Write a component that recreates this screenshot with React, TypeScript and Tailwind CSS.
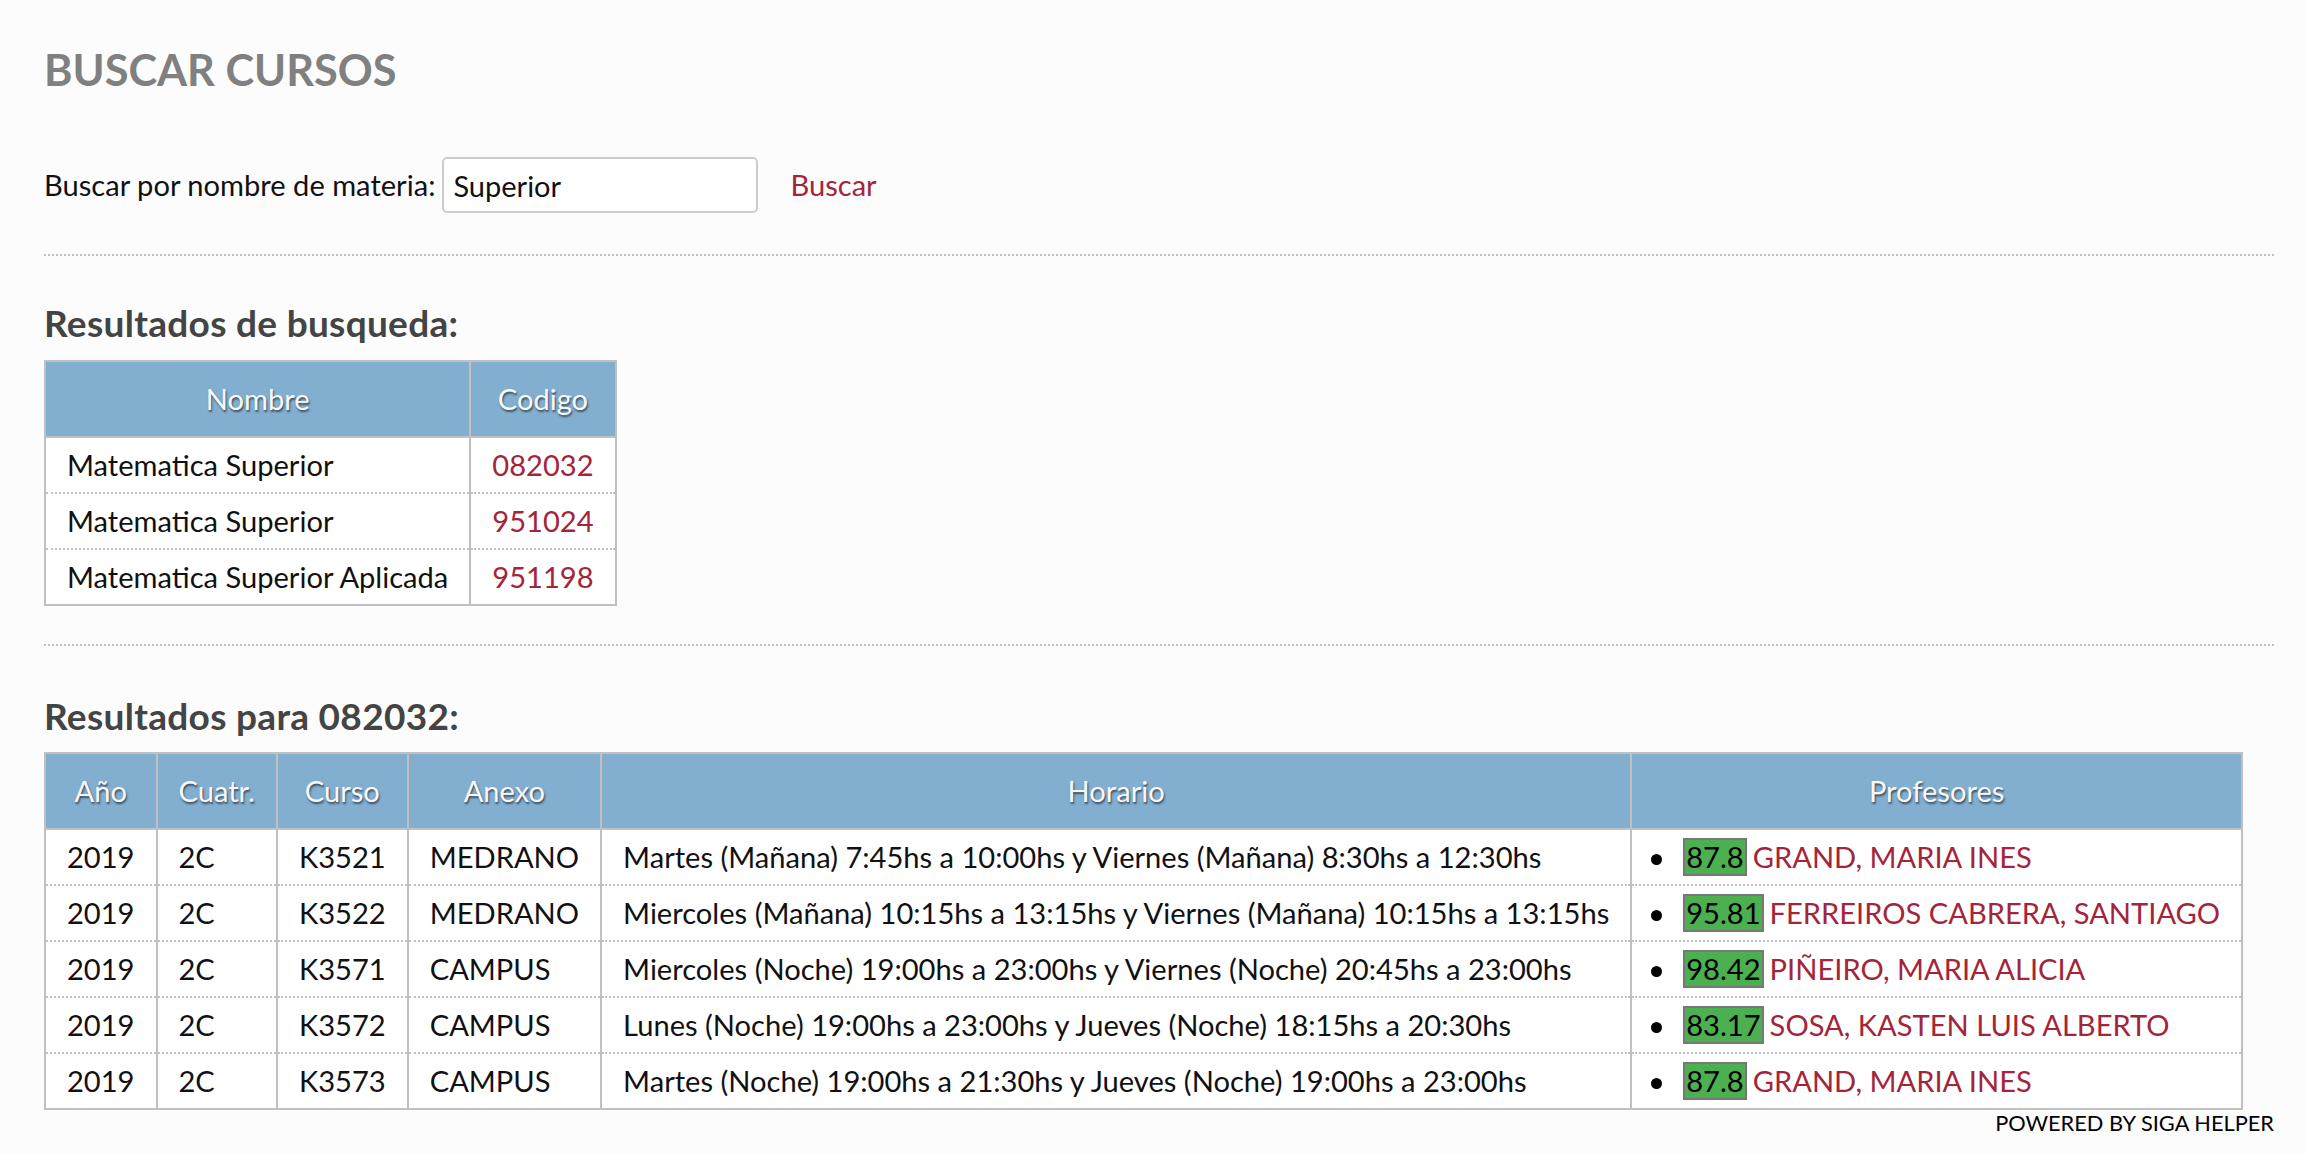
import React from "react";

const cursos = [
  { anio: "2019", cuatr: "2C", curso: "K3521", anexo: "MEDRANO", horario: "Martes (Mañana) 7:45hs a 10:00hs y Viernes (Mañana) 8:30hs a 12:30hs", score: "87.8", prof: "GRAND, MARIA INES" },
  { anio: "2019", cuatr: "2C", curso: "K3522", anexo: "MEDRANO", horario: "Miercoles (Mañana) 10:15hs a 13:15hs y Viernes (Mañana) 10:15hs a 13:15hs", score: "95.81", prof: "FERREIROS CABRERA, SANTIAGO" },
  { anio: "2019", cuatr: "2C", curso: "K3571", anexo: "CAMPUS", horario: "Miercoles (Noche) 19:00hs a 23:00hs y Viernes (Noche) 20:45hs a 23:00hs", score: "98.42", prof: "PIÑEIRO, MARIA ALICIA" },
  { anio: "2019", cuatr: "2C", curso: "K3572", anexo: "CAMPUS", horario: "Lunes (Noche) 19:00hs a 23:00hs y Jueves (Noche) 18:15hs a 20:30hs", score: "83.17", prof: "SOSA, KASTEN LUIS ALBERTO" },
  { anio: "2019", cuatr: "2C", curso: "K3573", anexo: "CAMPUS", horario: "Martes (Noche) 19:00hs a 21:30hs y Jueves (Noche) 19:00hs a 23:00hs", score: "87.8", prof: "GRAND, MARIA INES" },
];

const materias = [
  { nombre: "Matematica Superior", codigo: "082032" },
  { nombre: "Matematica Superior", codigo: "951024" },
  { nombre: "Matematica Superior Aplicada", codigo: "951198" },
];

const th =
  "px-[21px] py-[18px] leading-[38px] font-normal text-center text-[#f7f7f7] border-r-2 border-[#c0c0c0] whitespace-nowrap [text-shadow:1px_2px_2px_rgba(0,0,0,0.55)]";
const td =
  "px-[21px] py-[8px] leading-[38px] text-left border-r-2 border-[#c0c0c0] whitespace-nowrap";
const tr = "bg-white border-b-2 border-dotted border-[#c0c0c0]";

export default function App() {
  return (
    <div className="min-h-[1154px] bg-[#fcfcfc] pl-[44px] pr-[32px] pt-[43px] font-['Lato','Open_Sans',sans-serif] text-[29.1px] text-[#111]">
      <h1 className="text-[43.3px] leading-[52px] font-bold text-[#808080]">BUSCAR CURSOS</h1>

      <div className="mt-[62px] flex h-[56px] items-center">
        <span className="leading-[34px]">Buscar por nombre de materia:</span>
        <input
          defaultValue="Superior"
          className="ml-[7px] h-[56px] w-[316px] rounded-[5px] border-2 border-[#cccccc] bg-white pl-[9px] text-[29px] text-[#111] outline-none"
        />
        <a className="ml-[32px] cursor-pointer text-[#a4253a]">Buscar</a>
      </div>

      <div className="mt-[41px] border-t-2 border-dotted border-[#c0c0c0]" />

      <h2 className="mt-[46px] text-[37px] leading-[42px] font-bold tracking-[0.3px] text-[#444]">Resultados de busqueda:</h2>

      <table className="mt-[16px] border-collapse border-2 border-[#c0c0c0]">
        <thead>
          <tr className="bg-[#82aecf] border-b-2 border-[#c0c0c0]">
            <th className={th}>Nombre</th>
            <th className={th}>Codigo</th>
          </tr>
        </thead>
        <tbody>
          {materias.map((m, i) => (
            <tr key={i} className={tr}>
              <td className={td}>{m.nombre}</td>
              <td className={td + " text-[#a4253a]"}>{m.codigo}</td>
            </tr>
          ))}
        </tbody>
      </table>

      <div className="mt-[38px] border-t-2 border-dotted border-[#c0c0c0]" />

      <h2 className="mt-[49px] text-[37px] leading-[42px] font-bold tracking-[0.3px] text-[#444]">Resultados para 082032:</h2>

      <table className="mt-[15px] border-collapse border-2 border-[#c0c0c0]">
        <thead>
          <tr className="bg-[#82aecf] border-b-2 border-[#c0c0c0]">
            <th className={th}>Año</th>
            <th className={th}>Cuatr.</th>
            <th className={th}>Curso</th>
            <th className={th}>Anexo</th>
            <th className={th}>Horario</th>
            <th className={th}>Profesores</th>
          </tr>
        </thead>
        <tbody>
          {cursos.map((c, i) => (
            <tr key={i} className={tr}>
              <td className={td}>{c.anio}</td>
              <td className={td}>{c.cuatr}</td>
              <td className={td}>{c.curso}</td>
              <td className={td}>{c.anexo}</td>
              <td className={td}>{c.horario}</td>
              <td className={td}>
                <ul>
                  <li className="flex h-[38px] items-center">
                    <span className="mt-[4px] mr-[21px] ml-[-2px] inline-block h-[11px] w-[11px] shrink-0 rounded-full bg-black" />
                    <span className="inline-block h-[38px] border-2 border-[#777] bg-[#4caf50] px-[1px] leading-[34px] text-black">
                      {c.score}
                    </span>
                    <a className="ml-[6px] cursor-pointer text-[#a4253a]">{c.prof}</a>
                  </li>
                </ul>
              </td>
            </tr>
          ))}
        </tbody>
      </table>

      <div className="flex justify-end">
        <span className="text-[21.8px] leading-[25px] text-black">POWERED BY SIGA HELPER</span>
      </div>
    </div>
  );
}
